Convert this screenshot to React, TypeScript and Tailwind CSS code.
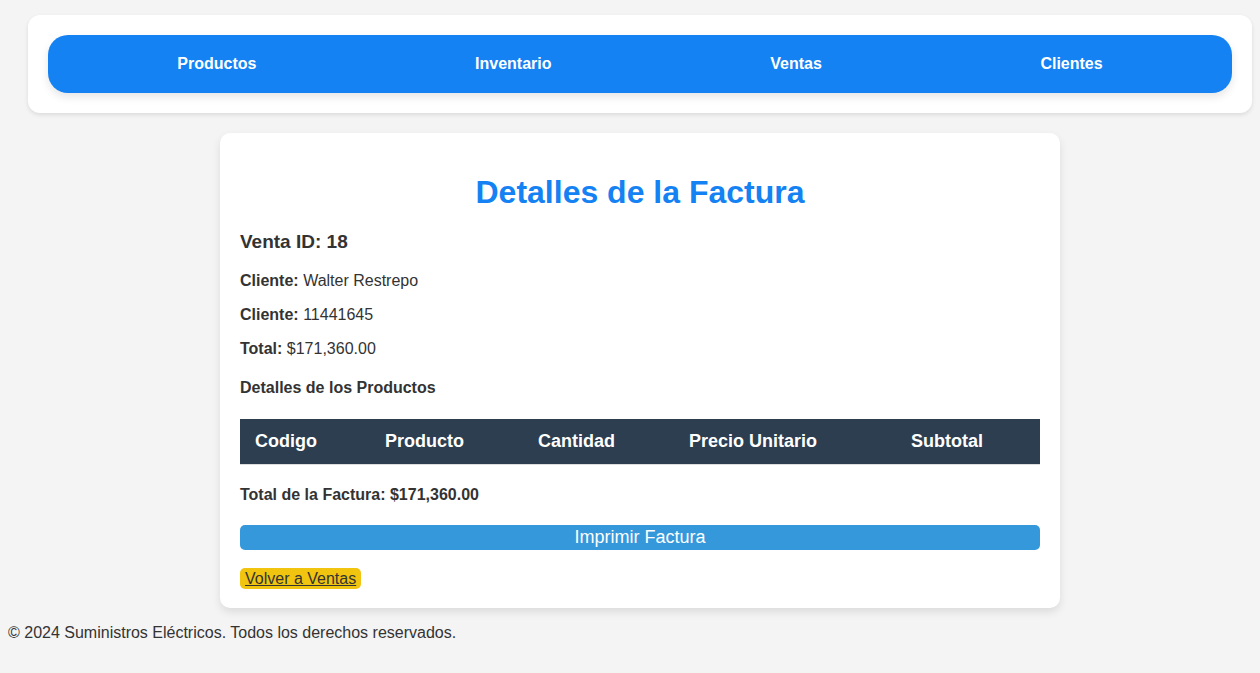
import React from "react";

const links = ["Productos", "Inventario", "Ventas", "Clientes"];

const columns = [
  { name: "Codigo", width: "w-[130px]" },
  { name: "Producto", width: "w-[153px]" },
  { name: "Cantidad", width: "w-[151px]" },
  { name: "Precio Unitario", width: "w-[222px]" },
  { name: "Subtotal", width: "w-auto" },
];

const details = [
  { label: "Cliente:", value: "Walter Restrepo" },
  { label: "Cliente:", value: "11441645" },
  { label: "Total:", value: "$171,360.00" },
];

export default function App() {
  return (
    <div className="min-h-screen bg-[#f4f4f4] px-2 pt-[15px] font-['Liberation_Sans',Arial,sans-serif] text-base leading-[18px] text-[#333333]">
      <div className="pl-5">
        <header className="rounded-xl bg-white p-5 shadow-[0_2px_4px_rgba(0,0,0,0.1)]">
          <nav className="rounded-[20px] bg-[#1482f3] p-5 shadow-[0_4px_8px_rgba(0,0,0,0.1)]">
            <ul className="flex justify-around">
              {links.map((link) => (
                <li key={link}>
                  <a href="#" className="font-bold text-white">{link}</a>
                </li>
              ))}
            </ul>
          </nav>
        </header>

        <main className="mx-auto mt-5 max-w-[840px] rounded-[10px] bg-white p-5 shadow-[0_4px_8px_rgba(0,0,0,0.1)]">
          <h1 className="mt-[21px] text-center text-[32px] leading-[37px] font-bold text-[#1482f3]">Detalles de la Factura</h1>
          <h3 className="mt-[21px] text-[19px] leading-5 font-bold">Venta ID: 18</h3>
          <div className="mt-5 flex flex-col gap-4">
            {details.map((item) => (
              <p key={item.value}>
                <strong>{item.label}</strong> {item.value}
              </p>
            ))}
          </div>
          <h4 className="mt-[21px] font-bold">Detalles de los Productos</h4>
          <table className="mt-[22px] w-full table-fixed border-collapse">
            <thead>
              <tr className="border-b border-[#dddddd] bg-[#2c3e50] text-left text-lg leading-[21px] text-white">
                {columns.map((column) => (
                  <th key={column.name} scope="col" className={`px-[15px] py-3 font-bold ${column.width}`}>
                    {column.name}
                  </th>
                ))}
              </tr>
            </thead>
          </table>
          <p className="mt-[21px] font-bold">Total de la Factura: $171,360.00</p>
          <button type="button" className="mt-[21px] block w-full cursor-pointer rounded-[5px] bg-[#3498db] py-0.5 text-lg leading-[21px] text-white">
            Imprimir Factura
          </button>
          <div className="mt-5">
            <a href="#" className="rounded-[5px] bg-[#f1c40f] px-[5px] py-0.5 underline">Volver a Ventas</a>
          </div>
        </main>
      </div>

      <footer className="py-4">
        <p>© 2024 Suministros Eléctricos. Todos los derechos reservados.</p>
      </footer>
    </div>
  );
}
